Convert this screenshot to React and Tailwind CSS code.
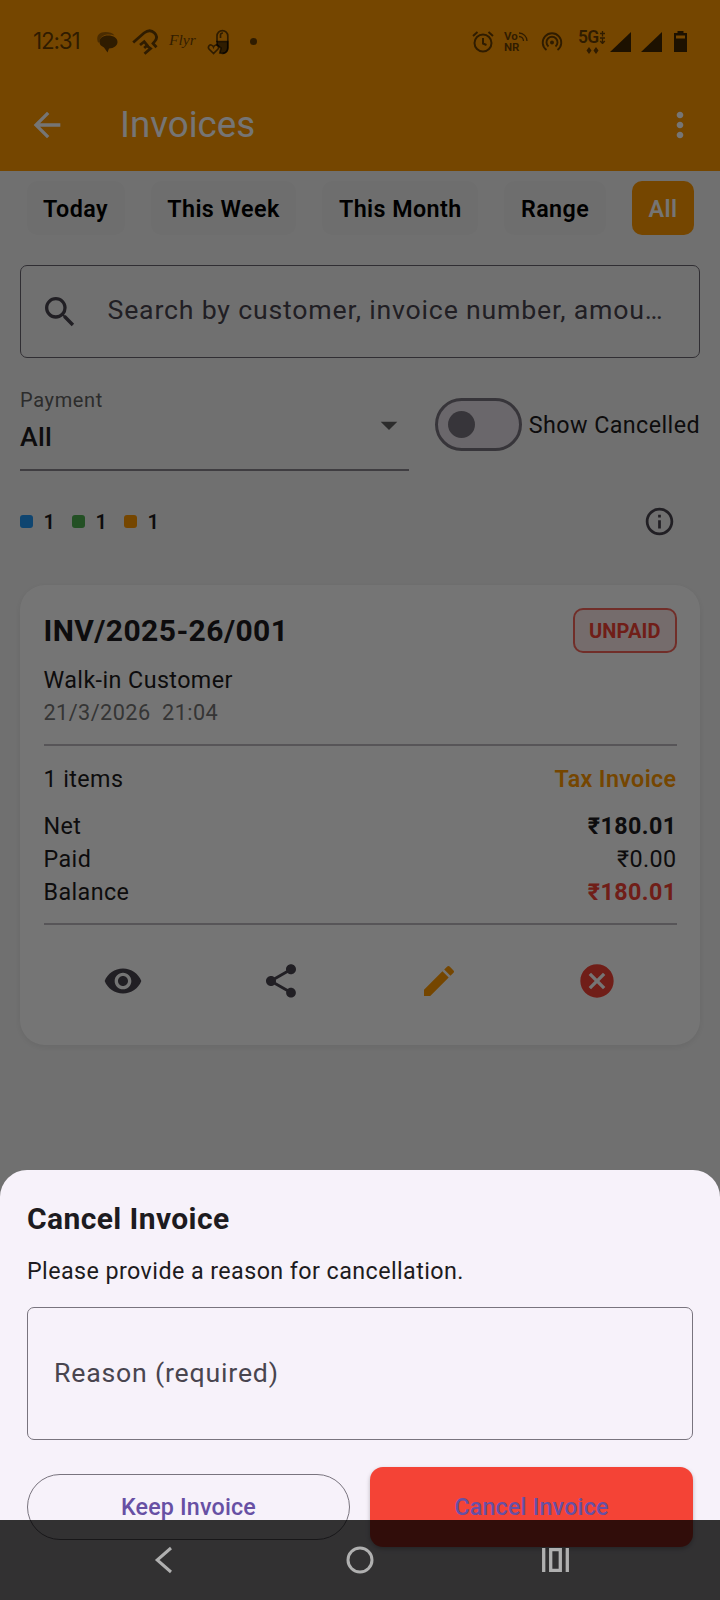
import React, { useState } from 'react';
import {
    MdArrowBack,
    MdMoreVert,
    MdSearch,
    MdArrowDropDown,
    MdInfoOutline,
    MdVisibility,
    MdShare,
    MdEdit,
    MdCancel
} from 'react-icons/md';

const PERIODS = ['Today', 'This Week', 'This Month', 'Range', 'All'];

const LEGEND = [
    { id: 'sent', color: 'bg-[#2196f3]', count: 1 },
    { id: 'paid', color: 'bg-[#4caf50]', count: 1 },
    { id: 'unpaid', color: 'bg-[#ff9800]', count: 1 }
];

const INVOICE = {
    number: 'INV/2025-26/001',
    status: 'UNPAID',
    customer: 'Walk-in Customer',
    date: '21/3/2026',
    time: '21:04',
    items: 1,
    type: 'Tax Invoice',
    totals: [
        { label: 'Net', value: '₹180.01', style: 'font-bold' },
        { label: 'Paid', value: '₹0.00', style: '' },
        { label: 'Balance', value: '₹180.01', style: 'font-bold text-[#f44336]' }
    ]
};

const StatusBar = () => (
    <div className="flex h-[77px] items-center justify-between pl-[33px] pr-[33px] pt-[6px] text-black/60">
        <div className="flex items-center">
            <span className="w-[48px] font-['Inter',sans-serif] text-[22.500px] leading-none tracking-[-1.200px]">12:31</span>
            {/* chat */}
            <svg className="ml-[15px] h-[22px] w-[22px]" viewBox="0 0 22 22" fill="currentColor">
                <path d="M1.500 10C0 4 4 1 9.500 1c4 0 7 .6 9 3.500C13 2.500 5 3 3.500 10c0 2-1.500 2-2 0z" opacity=".6" />
                <path d="M12 4.500c5.500 0 9.500 2.500 9.500 6.500 0 3.500-3.500 6.500-8.500 6.500l-1.500 4-3.500-5C5 15 3.500 13.500 3.500 11c0-4 3.500-6.500 8.500-6.500z" />
            </svg>
            {/* courier */}
            <svg className="ml-[14px] h-[28px] w-[26px]" viewBox="0 0 26 28" fill="none" stroke="currentColor" strokeWidth="2.800">
                <path d="M1.200 14.500 12 5c4-3 8-2.500 10.500 0s2.500 5.500.5 8l-2 2.500 3.500 3.800" />
                <path d="m8 17 4.200-3.300 3 3.600-3 2.700M14.500 17.500l4 3-6 5.300" />
            </svg>
            <span className="ml-[11px] mt-[-3px] w-[25px] font-['Liberation_Serif',serif] text-[15.500px] italic leading-none">Flyr</span>
            {/* pill with heart */}
            <svg className="ml-[13px] h-[28px] w-[22px]" viewBox="0 0 22 28" fill="none" stroke="currentColor" strokeWidth="1.700">
                <path d="M10 14V8a5.400 5.400 0 0 1 10.800 0v12c0 3-2 5.300-5 5.300" />
                <path d="M10 13.500h10.800V20c0 3.500-3 6.500-8 5l1.200-5-4-3z" fill="currentColor" />
                <path d="M13.500 10V7c0-1.500 1-2 2.500-2" />
                <path d="M6.500 25.500 2 21c-1.500-2 .2-4.500 2.200-4 1.200.3 1.900 1 2.300 2 .4-1 1.100-1.700 2.300-2 2-.5 3.700 2 2.200 4z" />
            </svg>
            <span className="ml-[21px] h-[7px] w-[7px] rounded-full bg-current" />
        </div>

        <div className="flex items-center">
            {/* alarm */}
            <svg className="h-[22px] w-[22px]" viewBox="0 0 22 22" fill="none" stroke="currentColor" strokeWidth="2">
                <circle cx="11" cy="12" r="8.500" />
                <path d="M11 7v5.500l3.500 1.500M1 5l4.500-4M21 5l-4.500-4" />
            </svg>
            <div className="relative ml-[10px] w-[24px] font-['Roboto',sans-serif] text-[11.500px] font-bold leading-[11px]">
                <div>Vo</div>
                <div>NR</div>
                <svg className="absolute right-0 top-[1px] h-[9px] w-[9px]" viewBox="0 0 9 9" fill="none" stroke="currentColor" strokeWidth="1.300">
                    <path d="M0 1a8 8 0 0 1 8 8M0 4.500A4.500 4.500 0 0 1 4.500 9" />
                </svg>
            </div>
            {/* hotspot */}
            <svg className="ml-[13px] h-[22px] w-[22px]" viewBox="0 0 22 22" fill="none" stroke="currentColor" strokeWidth="1.900">
                <path d="M5.500 19a9.300 9.300 0 1 1 11 0" />
                <path d="M7.500 15.500a5.500 5.500 0 1 1 7 0" />
                <circle cx="11" cy="11.500" r="2" fill="currentColor" stroke="none" />
            </svg>
            <div className="ml-[15px] flex h-[24px] w-[32px] flex-col items-start">
                <div className="flex items-start">
                    <span className="font-['Roboto',sans-serif] text-[17.500px] font-semibold leading-[15px] tracking-[-0.700px]">5G</span>
                    <svg className="mt-[1px] h-[13px] w-[7px]" viewBox="0 0 7 13" fill="none" stroke="currentColor" strokeWidth="1.300">
                        <path d="M3.500 0v5.500M1 2.500h5M3.500 7v5.500M1 7h5M1.200 10l2.300 2.500L5.800 10" />
                    </svg>
                </div>
                <svg className="ml-[8px] mt-[2px] h-[7px] w-[13px]" viewBox="0 0 13 7" fill="currentColor">
                    <path d="M3 0l2.500 3.500L3 7 .5 3.500zM10 0l2.500 3.500L10 7 7.500 3.500z" />
                </svg>
            </div>
            <svg className="h-[20px] w-[21px] text-black/75" viewBox="0 0 21 20" fill="currentColor"><path d="M21 0v20H0z" /></svg>
            <svg className="ml-[10px] h-[20px] w-[21px] text-black/75" viewBox="0 0 21 20" fill="currentColor"><path d="M21 0v20H0z" /></svg>
            <svg className="ml-[12px] h-[21px] w-[13px] text-black/75" viewBox="0 0 13 21" fill="currentColor" fillRule="evenodd">
                <path d="M3.500 0h6v2H13v19H0V2h3.500zM2 4.500V7.500h9V4.500z" />
            </svg>
        </div>
    </div>
);

const Header = () => (
    <header className="h-[171px] bg-[#ff9800]">
        <StatusBar />
        <div className="flex h-[94px] items-center pl-[26.500px] pr-[20px] pt-[1px] text-white">
            <MdArrowBack className="h-[40px] w-[40px]" />
            <h1 className="ml-[53.500px] flex-1 pt-[1px] text-[36.700px] leading-none">Invoices</h1>
            <MdMoreVert className="h-[40px] w-[40px]" />
        </div>
    </header>
);

const PeriodTabs = ({ value, onChange }) => (
    <div className="flex justify-between pl-[26.500px] pr-[26px] pt-[10px]">
        {PERIODS.map((period) => (
            <button
                key={period}
                onClick={() => onChange(period)}
                className={`h-[54px] rounded-[10px] px-[16.600px] pt-[2px] text-[23.300px] font-semibold tracking-[0.420px] ${
                    period === value ? 'bg-[#ff9800] text-white' : 'bg-[#f0f0f0] text-black'
                }`}
            >
                {period}
            </button>
        ))}
    </div>
);

const Filters = ({ showCancelled, onToggle }) => (
    <div className="mt-[27px] flex items-start px-[20px]">
        <div className="flex h-[86px] w-[389px] border-b-2 border-[#8a868e]">
            <div className="flex-1 pt-[1px]">
                <div className="text-[20px] leading-[28px] tracking-[0.650px] text-[#616161]">Payment</div>
                <div className="mt-[4px] text-[26.700px] font-medium leading-[38px] tracking-[0.200px]">All</div>
            </div>
            <MdArrowDropDown className="mt-[20px] h-[40px] w-[40px] text-[#616161]" />
        </div>
        <button
            onClick={onToggle}
            className={`ml-[26px] mt-[13px] flex h-[53px] w-[87px] items-center rounded-full border-[3px] border-[#79747e] bg-[#e6e0e9] px-[10px] ${
                showCancelled ? 'justify-end' : 'justify-start'
            }`}
        >
            <span className="h-[27px] w-[27px] rounded-full bg-[#79747e]" />
        </button>
        <span className="ml-[7px] mt-[13px] whitespace-nowrap text-[23.300px] leading-[54px] tracking-[0.420px]">Show Cancelled</span>
    </div>
);

const InvoiceCard = ({ invoice, onCancel }) => (
    <section className="mx-[20px] mt-[24px] h-[460px] rounded-[25px] bg-white px-[23.500px] pt-[23px] text-[23.300px] tracking-[0.420px] shadow-[0_2px_8px_rgba(0,0,0,0.08)]">
        <div className="flex h-[45px] items-center justify-between">
            <h2 className="text-[30px] font-bold">{invoice.number}</h2>
            <span className="flex h-[45px] items-center rounded-[10px] border-2 border-[#f44336]/80 bg-[#f44336]/10 px-[14px] text-[20px] font-bold tracking-[0.100px] text-[#f44336]">
                {invoice.status}
            </span>
        </div>
        <div className="mt-[11px] leading-[33px]">{invoice.customer}</div>
        <div className="whitespace-pre text-[21.700px] leading-[32px] text-[#757575]">{`${invoice.date}  ${invoice.time}`}</div>

        <div className="mt-[15px] h-[2px] bg-[#bdb9c1]" />

        <div className="mt-[17px] flex justify-between leading-[33px]">
            <span>{invoice.items} items</span>
            <span className="font-semibold tracking-[0.360px] text-[#ff9800]">{invoice.type}</span>
        </div>
        <div className="mt-[13.500px]">
            {invoice.totals.map((row) => (
                <div key={row.label} className="flex justify-between leading-[33.300px]">
                    <span>{row.label}</span>
                    <span className={row.style}>{row.value}</span>
                </div>
            ))}
        </div>

        <div className="mt-[14px] h-[2px] bg-[#bdb9c1]" />

        {/* Actions */}
        <div className="mt-[15.500px] grid h-[80px] grid-cols-4 place-items-center text-[#49454f]">
            <button><MdVisibility className="h-[40px] w-[40px]" /></button>
            <button><MdShare className="h-[40px] w-[40px]" /></button>
            <button><MdEdit className="h-[40px] w-[40px] text-[#ff9800]" /></button>
            <button onClick={onCancel}><MdCancel className="h-[40px] w-[40px] text-[#f44336]" /></button>
        </div>
    </section>
);

const CancelSheet = ({ onClose }) => (
    <div className="absolute inset-x-0 bottom-0 h-[430px] rounded-t-[27px] bg-[#f7f2fa] px-[27px] pt-[27px]">
        <h2 className="text-[30px] font-bold leading-[43px] tracking-[0.400px]">Cancel Invoice</h2>
        <p className="mt-[14px] text-[23.300px] leading-[34px] tracking-[0.420px]">Please provide a reason for cancellation.</p>
        <div className="mt-[19px] flex h-[133px] items-center rounded-[7px] border border-[#79747e] px-[26px] text-[26.700px] tracking-[0.800px] text-[#49454f]">
            Reason (required)
        </div>
        <div className="mt-[27px] flex items-center gap-[20px] text-[23.300px] font-medium tracking-[0.170px] text-[#6750a4]">
            <button onClick={onClose} className="h-[66px] w-[323px] rounded-full border border-[#79747e]">Keep Invoice</button>
            <button className="h-[80px] w-[323px] rounded-[13px] bg-[#f44336] shadow-[0_2px_4px_rgba(0,0,0,0.25)]">Cancel Invoice</button>
        </div>
    </div>
);

// Android three-button navigation
const NavigationBar = () => (
    <nav className="absolute inset-x-0 bottom-0 flex h-[80px] items-center justify-between bg-black/80 px-[151px] text-[#b0b0b0]">
        <svg className="h-[28px] w-[26px]" viewBox="0 0 26 28" fill="none" stroke="currentColor" strokeWidth="3">
            <path d="M20 2 6.200 14 20 26" />
        </svg>
        <svg className="h-[28px] w-[28px]" viewBox="0 0 28 28" fill="none" stroke="currentColor" strokeWidth="3">
            <circle cx="14" cy="14" r="12" />
        </svg>
        <svg className="h-[26px] w-[27px]" viewBox="0 0 27 26" fill="none" stroke="currentColor" strokeWidth="3.300">
            <path d="M1.700 1v24M25.300 1v24M8.700 2.700h9.600v20.600H8.700z" />
        </svg>
    </nav>
);

const App = () => {
    const [period, setPeriod] = useState('All');
    const [showCancelled, setShowCancelled] = useState(false);
    const [isSheetOpen, setIsSheetOpen] = useState(true);

    return (
        <div className="relative h-[1600px] w-[720px] overflow-hidden bg-[#f5f5f5] font-['Roboto',sans-serif] text-[#1d1b20]">
            <Header />
            <PeriodTabs value={period} onChange={setPeriod} />

            {/* Search */}
            <div className="mx-[20px] mt-[30px] flex h-[93px] items-center rounded-[7px] border border-[#6a656f] pl-[19px] text-[#49454f]">
                <MdSearch className="h-[40px] w-[40px] shrink-0" />
                <span className="ml-[27.500px] mt-[-2px] whitespace-nowrap text-[26.700px] tracking-[0.800px]">
                    Search by customer, invoice number, amou…
                </span>
            </div>

            <Filters
                showCancelled={showCancelled}
                onToggle={() => setShowCancelled(!showCancelled)}
            />

            {/* Legend */}
            <div className="mt-[10px] flex h-[80px] items-center pl-[20px] pr-[44px]">
                {LEGEND.map((item) => (
                    <div key={item.id} className="flex w-[52px] items-center">
                        <span className={`h-[13px] w-[13px] rounded-[3px] ${item.color}`} />
                        <span className="ml-[10.500px] mt-[2px] text-[20px] font-semibold">{item.count}</span>
                    </div>
                ))}
                <MdInfoOutline className="ml-auto h-[33px] w-[33px] text-[#49454f]" />
            </div>

            <InvoiceCard invoice={INVOICE} onCancel={() => setIsSheetOpen(true)} />

            {isSheetOpen && (
                <>
                    <div className="absolute inset-0 bg-black/54" />
                    <CancelSheet onClose={() => setIsSheetOpen(false)} />
                </>
            )}
            <NavigationBar />
        </div>
    );
};

export default App;
